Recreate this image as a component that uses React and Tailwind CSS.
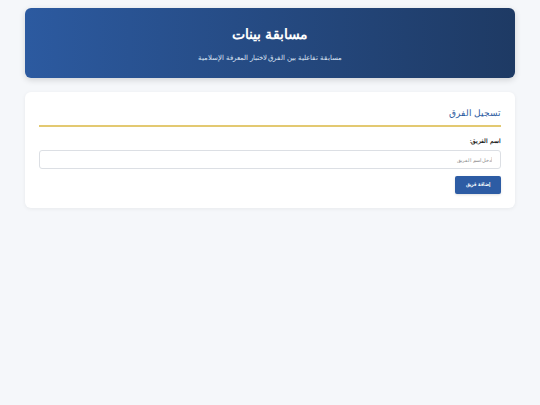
export default function App() {
  return (
    <div dir="rtl" className="min-h-[405px] bg-[#f5f7fa] px-[25px] pt-[8px] font-[Tahoma,sans-serif]">
      <header className="h-[70px] rounded-[6px] bg-gradient-to-l from-[#1e3a64] to-[#2c5aa0] shadow-[0_2px_6px_rgba(0,0,0,0.15)] flex flex-col items-center justify-center text-white">
        <h1 className="text-[13.5px] font-bold leading-none mt-[4px]">مسابقة بينات</h1>
        <p className="text-[6.6px] leading-none mt-[14px] text-[#dbe4f3]">مسابقة تفاعلية بين الفرق لاختبار المعرفة الإسلامية</p>
      </header>

      <section className="mt-[14px] bg-white rounded-[6px] shadow-[0_1px_4px_rgba(0,0,0,0.06)] px-[14px] pt-[17px] pb-[14px]">
        <h2 className="text-[8.5px] text-[#2c5aa0] leading-none pb-[7px] border-b-2 border-[#e3c971]">تسجيل الفرق</h2>
        <label className="block mt-[12px] text-[5.5px] font-bold text-[#222] leading-none">اسم الفريق:</label>
        <input
          type="text"
          placeholder="أدخل اسم الفريق"
          className="block w-full h-[19px] mt-[6px] px-[8px] text-[5px] border border-[#dcdfe4] rounded-[3px] placeholder:text-[#888] outline-none"
        />
        <button className="mt-[7px] h-[18px] w-[46px] bg-[#2d5ca4] text-white text-[5px] font-bold rounded-[2px] shadow-sm">
          إضافة فريق
        </button>
      </section>
    </div>
  )
}
